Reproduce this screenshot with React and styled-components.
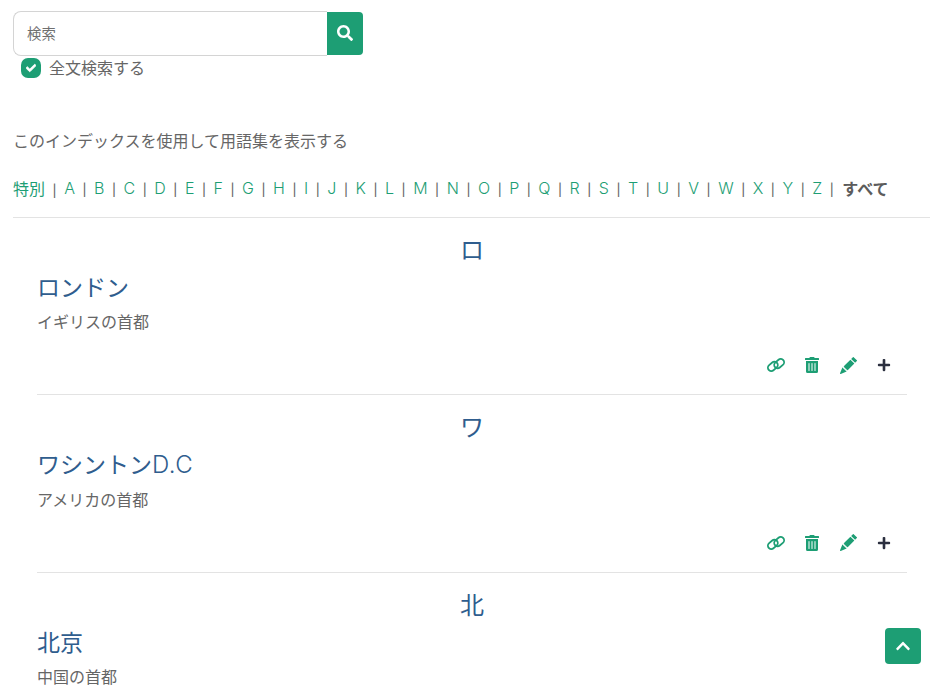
import styled, { createGlobalStyle } from "styled-components";
import { FaCheck, FaChevronUp, FaPlus, FaSearch, FaTrashAlt } from "react-icons/fa";
import { BsPencilFill } from "react-icons/bs";

const CJK = `"Noto Sans CJK JP", sans-serif`;
const GREEN = "#1d9e74";

const GlobalStyle = createGlobalStyle`
  html, body {
    margin: 0;
    height: 697px;
    overflow: hidden;
    background: #fff;
    color: #666;
    font-family: "Lato", ${CJK};
    font-size: 16px;
  }
`;

const Page = styled.div`
  padding: 11px 10px 0 13px;
`;

const SearchRow = styled.form`
  display: flex;
  width: 350px;
  height: 45px;
  margin: 0;
`;

const SearchInput = styled.input`
  flex: 1;
  min-width: 0;
  box-sizing: border-box;
  padding: 0 13px 2px;
  border: 1px solid #d4d4d4;
  border-right: 0;
  border-radius: 8px 0 0 8px;
  outline: none;
  font-family: ${CJK};
  font-size: 14.4px;
  &::placeholder {
    color: #6f6f6f;
    opacity: 1;
  }
`;

const SearchButton = styled.button`
  display: flex;
  align-items: center;
  justify-content: center;
  width: 36px;
  margin: 1px 0;
  padding: 0 0 2px;
  border: 0;
  border-radius: 0 4px 4px 0;
  background: ${GREEN};
  color: #fff;
  font-size: 16px;
`;

const CheckRow = styled.label`
  display: flex;
  align-items: center;
  gap: 8px;
  height: 20px;
  margin: 2px 0 0 8px;
  line-height: 20px;
`;

const CheckBox = styled.span`
  display: flex;
  align-items: center;
  justify-content: center;
  width: 20px;
  height: 20px;
  border-radius: 7px;
  background: ${GREEN};
  color: #fff;
  font-size: 10px;

  svg {
    stroke: currentColor;
    stroke-width: 40;
  }
`;

const IndexNote = styled.p`
  margin: 51px 0 0;
  line-height: 24px;
`;

const AlphaBar = styled.div`
  display: flex;
  align-items: center;
  height: 24px;
  margin: 23px 0 0;
  white-space: nowrap;
`;

const AlphaLink = styled.a`
  color: ${GREEN};
  font-family: ${(props) => (props.$cjk ? CJK : `"Inter", sans-serif`)};
  font-weight: ${(props) => (props.$cjk ? 400 : 300)};
`;

const AlphaSep = styled.span`
  margin: 0 7.55px;
  color: #666;
`;

const AllLink = styled.strong`
  margin-left: 1px;
  color: #5c5c5c;
  font-weight: 700;
`;

const Rule = styled.hr`
  margin: 17px 0 0;
  border: 0;
  border-top: 1px solid #e3e3e3;
`;

const Entries = styled.div`
  margin-top: -0.5px;
  padding: 0 23px 0 24px;
`;

const LetterHeading = styled.h2`
  margin: 0;
  padding-top: 16px;
  color: #2f5d8e;
  font-size: 24px;
  font-weight: 400;
  line-height: 32px;
  text-align: center;
`;

const Term = styled.h3`
  margin: 6px 0 0;
  color: #2f5d8e;
  font-size: 23px;
  font-weight: 400;
  line-height: 30px;
`;

const TermLatin = styled.span`
  font-family: "Inter", sans-serif;
  font-weight: 300;
  font-size: 24px;
  line-height: 1;
  letter-spacing: 0.6px;
`;

const Definition = styled.p`
  margin: 8.5px 0 0;
  line-height: 24px;
`;

const Actions = styled.div`
  display: flex;
  justify-content: flex-end;
  align-items: center;
  gap: 18px;
  height: 22px;
  margin-top: 20px;
  padding-right: 14px;
  padding-bottom: 18px;
  border-bottom: 1px solid #e3e3e3;
  color: ${GREEN};
`;

const ActionIcon = styled.span`
  display: flex;
  align-items: center;
  justify-content: center;
  width: 18px;
  color: ${(props) => props.$color || GREEN};
  font-size: ${(props) => props.$size || 18}px;
`;

const BackToTop = styled.button`
  position: fixed;
  right: 19px;
  bottom: 33px;
  display: flex;
  align-items: center;
  justify-content: center;
  width: 36px;
  height: 36px;
  padding: 0;
  border: 0;
  border-radius: 4px;
  background: ${GREEN};
  color: #fff;
  font-size: 16px;
`;

const letters = "ABCDEFGHIJKLMNOPQRSTUVWXYZ".split("");

const entries = [
  { letter: "ロ", term: "ロンドン", definition: "イギリスの首都" },
  { letter: "ワ", term: "ワシントン", latin: "D.C", definition: "アメリカの首都" },
  { letter: "北", term: "北京", definition: "中国の首都" },
];

// flat chain, the icon set's link glyph lies wider than the package one
const LinkIcon = () => (
  <svg width="20" height="16" viewBox="0 0 20 16" fill="none" stroke="currentColor" strokeWidth="2">
    <rect x="0.5" y="5.75" width="12" height="7.5" rx="3.75" transform="rotate(-40 6.5 9.5)" />
    <rect x="7.5" y="2.75" width="12" height="7.5" rx="3.75" transform="rotate(-40 13.5 6.5)" />
  </svg>
);

export default function App() {
  return (
    <Page>
      <GlobalStyle />
      <SearchRow>
        <SearchInput placeholder="検索" />
        <SearchButton type="button">
          <FaSearch />
        </SearchButton>
      </SearchRow>
      <CheckRow>
        <CheckBox>
          <FaCheck />
        </CheckBox>
        全文検索する
      </CheckRow>
      <IndexNote>このインデックスを使用して用語集を表示する</IndexNote>
      <AlphaBar>
        <AlphaLink $cjk>特別</AlphaLink>
        <AlphaSep>|</AlphaSep>
        {letters.map((letter) => (
          <span key={letter}>
            <AlphaLink>{letter}</AlphaLink>
            <AlphaSep>|</AlphaSep>
          </span>
        ))}
        <AllLink>すべて</AllLink>
      </AlphaBar>
      <Rule />
      <Entries>
        {entries.map((entry) => (
          <section key={entry.letter}>
            <LetterHeading>{entry.letter}</LetterHeading>
            <Term>
              {entry.term}
              {entry.latin && <TermLatin>{entry.latin}</TermLatin>}
            </Term>
            <Definition>{entry.definition}</Definition>
            <Actions>
              <ActionIcon><LinkIcon /></ActionIcon>
              <ActionIcon $size={16}><FaTrashAlt /></ActionIcon>
              <ActionIcon $size={17}><BsPencilFill /></ActionIcon>
              <ActionIcon $color="#2b2f3f" $size={14}><FaPlus /></ActionIcon>
            </Actions>
          </section>
        ))}
      </Entries>
      <BackToTop type="button">
        <FaChevronUp />
      </BackToTop>
    </Page>
  );
}
